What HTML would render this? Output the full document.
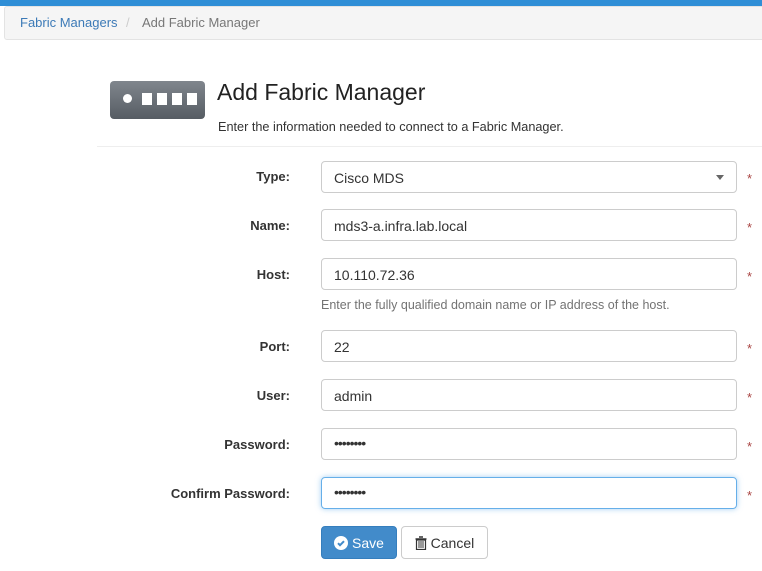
<!DOCTYPE html>
<html><head><style>
body{margin:0;width:762px;height:571px;overflow:hidden;background:#fff;font-family:"Liberation Sans",sans-serif;font-size:13px;color:#333;position:relative}
.top{position:absolute;left:0;top:0;width:762px;height:6px;background:#2f8ed6}
.bc{position:absolute;left:4px;top:6px;width:770px;height:34px;background:#f5f5f5;border:1px solid #e3e3e3;border-radius:3px;box-sizing:border-box}
.bc span{position:absolute;top:8px;font-size:13px}
.icon{position:absolute;left:110px;top:81px;width:95px;height:38px;border-radius:4px;background:linear-gradient(#80868d,#565c63)}
.icon i{position:absolute;top:12px;width:10px;height:12px;background:#fff}
h1{position:absolute;left:217px;top:79px;margin:0;font-weight:normal;font-size:23px;color:#222}
.sub{position:absolute;left:218px;top:120px;font-size:12.7px}
.hr{position:absolute;left:97px;top:146px;width:665px;height:1px;background:#eee}
.lbl{position:absolute;right:472px;font-weight:bold;font-size:13px}
.inp{position:absolute;left:321px;width:416px;height:32px;border:1px solid #ccc;border-radius:4px;box-sizing:border-box;padding:8px 12px;font-size:14px;color:#333}
.ast{position:absolute;left:747px;color:#a94442;font-size:13px}
.help{position:absolute;left:321px;top:298px;color:#737373;font-size:12.5px}
.btn{position:absolute;top:526px;height:33px;border-radius:4px;box-sizing:border-box;font-size:14px;padding:8px 0;text-align:center}
.pw{font-size:14px;letter-spacing:-1px;padding-top:6px}
</style></head><body>
<div class="top"></div>
<div class="bc"><span style="left:15px;color:#3c7ab7">Fabric Managers</span><span style="left:121px;color:#ccc">/</span><span style="left:137px;color:#777">Add Fabric Manager</span></div>
<div class="icon"><span style="position:absolute;left:13px;top:13px;width:9px;height:9px;border-radius:50%;background:#fff"></span><i style="left:32px"></i><i style="left:47px"></i><i style="left:62px"></i><i style="left:77px"></i></div>
<h1>Add Fabric Manager</h1>
<div class="sub">Enter the information needed to connect to a Fabric Manager.</div>
<div class="hr"></div>

<div class="lbl" style="top:169px">Type:</div><div class="inp" style="top:161px">Cisco MDS<span style="position:absolute;right:12px;top:13px;border:4px solid transparent;border-top:5px solid #666;border-bottom:0"></span></div><div class="ast" style="top:171px">*</div>
<div class="lbl" style="top:218px">Name:</div><div class="inp" style="top:209px">mds3-a.infra.lab.local</div><div class="ast" style="top:220px">*</div>
<div class="lbl" style="top:267px">Host:</div><div class="inp" style="top:258px">10.110.72.36</div><div class="ast" style="top:269px">*</div>
<div class="help">Enter the fully qualified domain name or IP address of the host.</div>
<div class="lbl" style="top:339px">Port:</div><div class="inp" style="top:330px">22</div><div class="ast" style="top:341px">*</div>
<div class="lbl" style="top:388px">User:</div><div class="inp" style="top:379px">admin</div><div class="ast" style="top:390px">*</div>
<div class="lbl" style="top:437px">Password:</div><div class="inp pw" style="top:428px">••••••••</div><div class="ast" style="top:439px">*</div>
<div class="lbl" style="top:486px">Confirm Password:</div><div class="inp pw" style="top:477px;border-color:#66afe9;box-shadow:0 0 6px rgba(102,175,233,.6)">••••••••</div><div class="ast" style="top:488px">*</div>

<div class="btn" style="left:321px;width:76px;background:#428bca;border:1px solid #357ebd;color:#fff"><svg width="14" height="14" viewBox="0 0 14 14" style="vertical-align:-2px"><circle cx="7" cy="7" r="7" fill="#fff"/><path d="M4 7.2l2 2 4-4" stroke="#428bca" stroke-width="2" fill="none"/></svg> Save</div>
<div class="btn" style="left:401px;width:87px;background:#fff;border:1px solid #ccc;color:#333"><svg width="12" height="14" viewBox="0 0 12 14" style="vertical-align:-2px"><path d="M4 1h4M0.5 3h11" stroke="#333" stroke-width="1.5"/><path d="M1.5 4h9v9.5h-9z" fill="none" stroke="#333" stroke-width="1.2"/><path d="M4 5v7M6 5v7M8 5v7" stroke="#333" stroke-width="1"/></svg> Cancel</div>
</body></html>
